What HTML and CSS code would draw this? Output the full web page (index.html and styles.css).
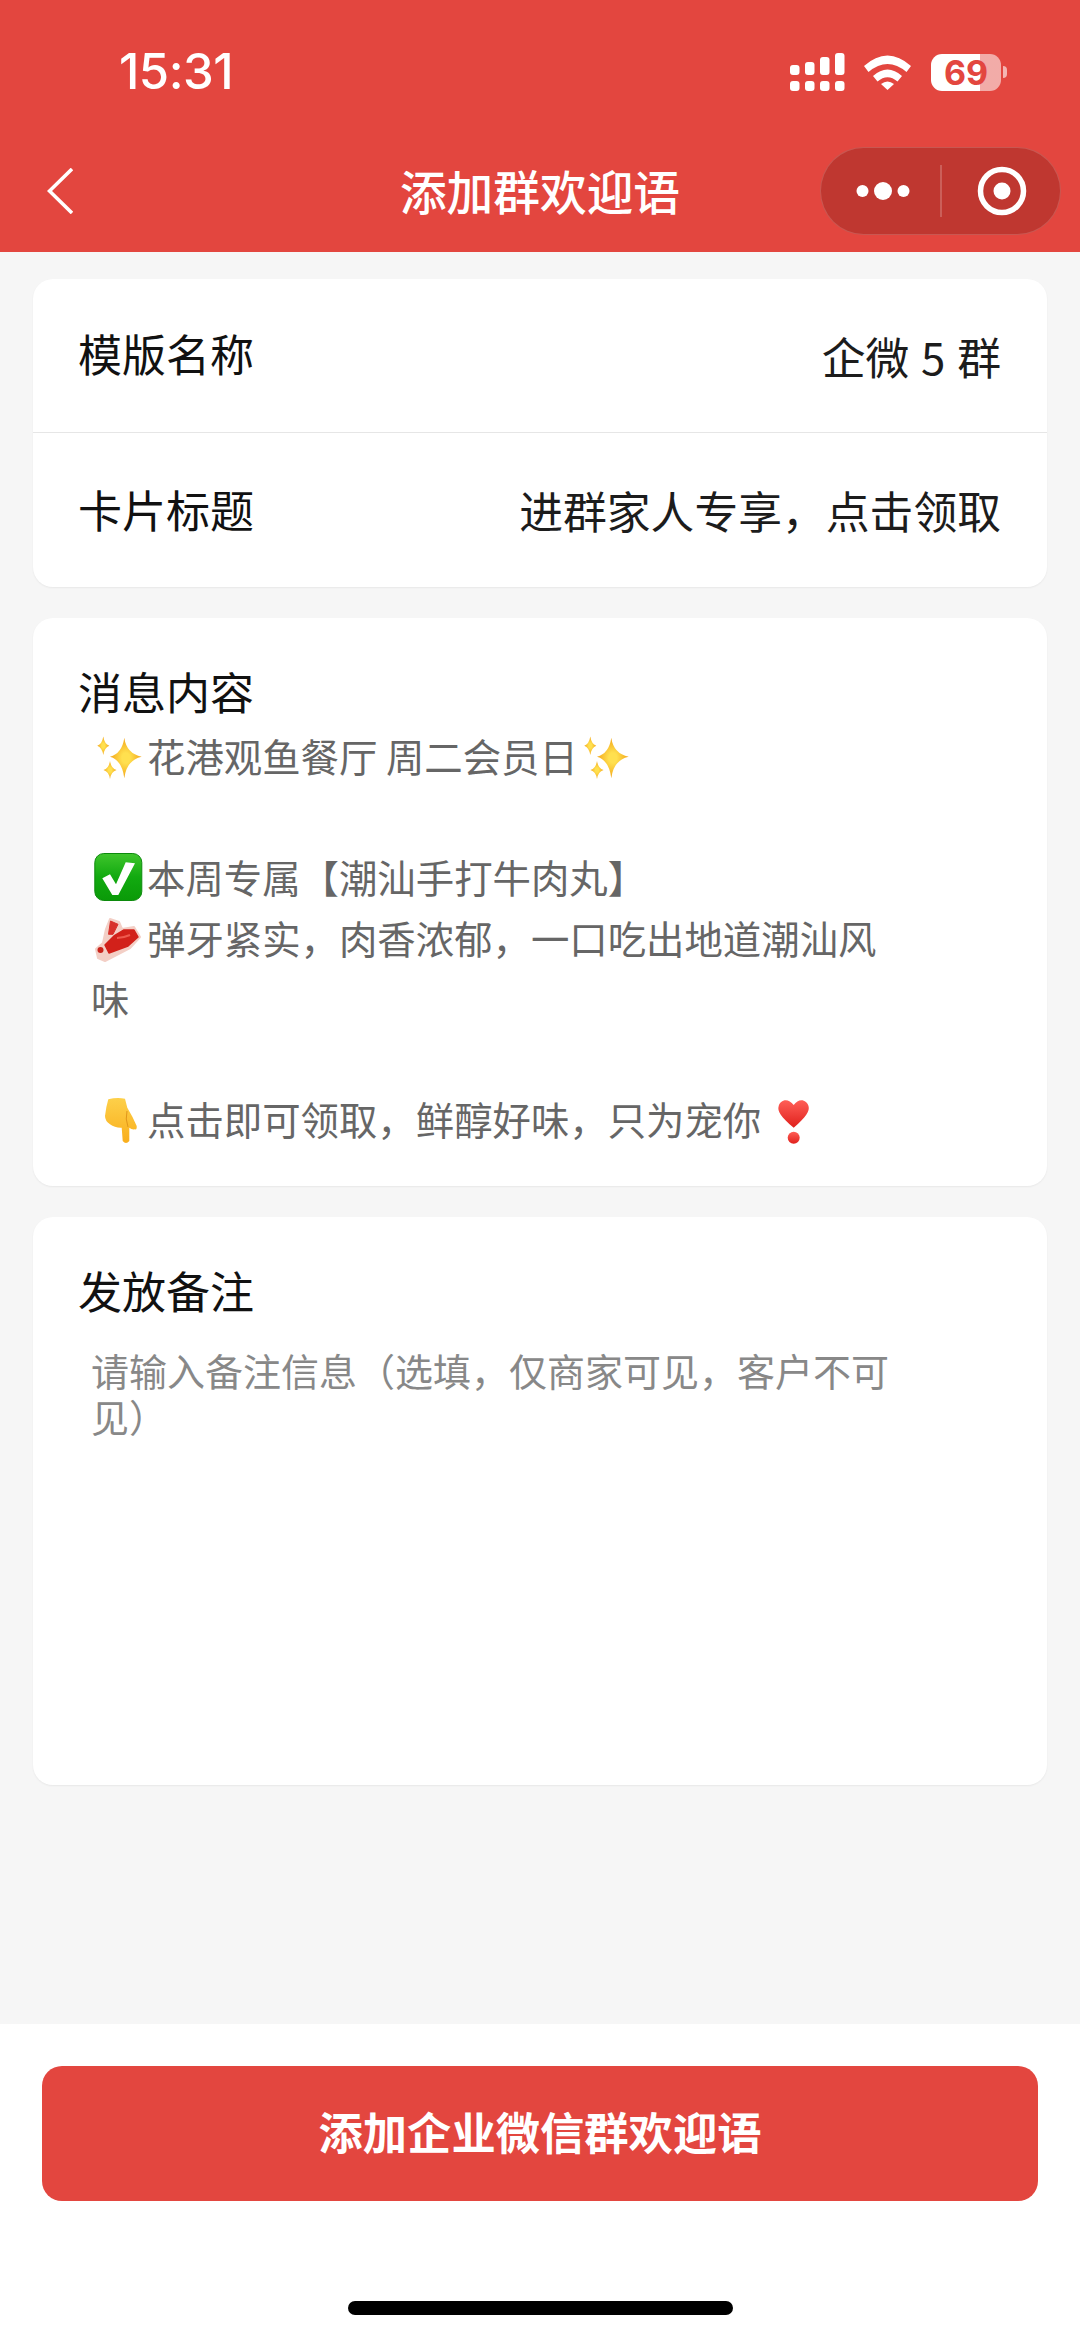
FILE: index.html
```html
<!DOCTYPE html>
<html lang="zh-CN">
  <head>
    <meta charset="UTF-8" />
    <meta name="viewport" content="width=device-width, initial-scale=1.0" />
    <title>添加群欢迎语</title>
    <link rel="stylesheet" href="styles.css">
  </head>
  <body>
    <svg class="defs" width="0" height="0">
      <defs>
        <radialGradient id="spark">
          <stop offset="0.25" stop-color="#ffe04f" />
          <stop offset="1" stop-color="#f3a61a" />
        </radialGradient>
        <linearGradient id="green" x1="0" y1="0" x2="0" y2="1">
          <stop offset="0" stop-color="#3fc52c" />
          <stop offset="0.5" stop-color="#12aa10" />
          <stop offset="1" stop-color="#0a9a08" />
        </linearGradient>
        <linearGradient id="finger" x1="0" y1="0" x2="0" y2="1">
          <stop offset="0" stop-color="#fdd04a" />
          <stop offset="1" stop-color="#f9ae1c" />
        </linearGradient>
        <linearGradient id="heart" x1="0" y1="0" x2="0" y2="1">
          <stop offset="0" stop-color="#ff5f57" />
          <stop offset="1" stop-color="#e0201c" />
        </linearGradient>
        <symbol id="sparkles" viewBox="-1 0 56 48">
          <path fill="url(#spark)" d="M32.300 3.700Q34.500 19.500 49.700 22.700Q34.500 26 32.300 44.300Q30 26 18 22.700Q30 19.500 32.300 3.700Z" />
          <path fill="url(#spark)" d="M11.300 2.400Q12.500 10 17.300 11.700Q12.500 13.500 11.300 21Q10 13.500 5.300 11.700Q10 10 11.300 2.400Z" />
          <path fill="url(#spark)" d="M18 27Q19.200 34.500 24.500 36Q19.200 37.500 18 45Q16.800 37.500 11.500 36Q16.800 34.500 18 27Z" />
        </symbol>
      </defs>
    </svg>

    <div class="page">
      <header class="topbar">
        <div class="statusbar">
          <span class="time">15:31</span>
          <div class="status-icons">
            <svg class="signal" width="55" height="38" viewBox="0 0 55 38">
              <g fill="#fff">
                <rect x="0" y="12" width="9.500" height="10" rx="3" />
                <rect x="15" y="9" width="9.500" height="13" rx="3" />
                <rect x="30" y="4" width="9.500" height="18" rx="3" />
                <rect x="45" y="0" width="9.500" height="22" rx="3" />
                <rect x="0" y="28" width="9.500" height="10" rx="3" />
                <rect x="15" y="28" width="9.500" height="10" rx="3" />
                <rect x="30" y="28" width="9.500" height="10" rx="3" />
                <rect x="45" y="28" width="9.500" height="10" rx="3" />
              </g>
            </svg>
            <svg class="wifi" width="47" height="36" viewBox="0 0 47 36">
              <g fill="#fff">
                <path d="M0 12Q23.500-9 47 12L42.500 18Q23.500 2 4.500 18Z" />
                <path d="M9 22Q23.500 9 38 22L33.500 27.500Q23.500 19 13.500 27.500Z" />
                <path d="M17 30Q23.500 25 30 30L23.500 36Z" />
              </g>
            </svg>
            <div class="battery"><span>69</span></div>
            <span class="battery-nub"></span>
          </div>
        </div>
        <nav class="navbar">
          <svg class="back" width="26" height="46" viewBox="0 0 26 46">
            <path d="M25 1L2.500 23L25 45" fill="none" stroke="#fff" stroke-width="3.600" />
          </svg>
          <h1 class="nav-title">添加群欢迎语</h1>
          <div class="capsule">
            <svg class="capsule-dots" width="64" height="20" viewBox="0 0 64 20">
              <circle cx="11.500" cy="10" r="6" fill="#fff" />
              <circle cx="32" cy="10" r="9" fill="#fff" />
              <circle cx="52.500" cy="10" r="6" fill="#fff" />
            </svg>
            <span class="capsule-line"></span>
            <svg class="capsule-ring" width="50" height="50" viewBox="0 0 50 50">
              <circle cx="25" cy="25" r="21.500" fill="none" stroke="#fff" stroke-width="5.500" />
              <circle cx="25" cy="25" r="8.500" fill="#fff" />
            </svg>
          </div>
        </nav>
      </header>

      <main class="content">
        <section class="card">
          <div class="row row-line">
            <span class="label">模版名称</span>
            <span class="value">企微 5 群</span>
          </div>
          <div class="row">
            <span class="label">卡片标题</span>
            <span class="value">进群家人专享，点击领取</span>
          </div>
        </section>

        <section class="card block">
          <div class="label">消息内容</div>
          <div class="message">
            <p class="line"><svg class="emoji"><use href="#sparkles" /></svg>花港观鱼餐厅 周二会员日<svg class="emoji"><use href="#sparkles" /></svg></p>
            <p class="line">&nbsp;</p>
            <p class="line"><svg class="emoji" viewBox="-1 0 56 48">
                <rect x="2.800" y="-1.500" width="47" height="47" rx="9" fill="url(#green)" stroke="#0c8a0c" stroke-width="1" />
                <path d="M10.300 23.300L18 19.300L24 29.300L33.700 7.300L43 8.300L26.300 40L20.300 40Z" fill="#fff" />
              </svg>本周专属【潮汕手打牛肉丸】</p>
            <p class="line"><svg class="emoji" viewBox="-1 0 56 48">
                <path d="M18 3L27 6L30 13L42 11L48 21L38 32L13 45L6 42L4 33L11 27L14 13Z" fill="#f3cfc6" stroke="#f3cfc6" stroke-width="2" stroke-linejoin="round" />
                <path d="M32 14L42 14L46 21L36 30L17 37L13 29L22 20Z" fill="#d2211a" stroke="#d2211a" stroke-width="1.500" stroke-linejoin="round" />
                <path d="M18.500 5L26 8.300L21 18.300L16.500 18.300Z" fill="#d8302a" stroke="#d8302a" stroke-width="1" stroke-linejoin="round" />
                <path d="M25 22Q31 22 38 19" fill="none" stroke="#ee5a4e" stroke-width="2" />
                <circle cx="8.500" cy="34" r="3" fill="#c9241c" />
              </svg>弹牙紧实，肉香浓郁，一口吃出地道潮汕风味</p>
            <p class="line">&nbsp;</p>
            <p class="line"><svg class="emoji" viewBox="-1 0 56 48">
                <path d="M16.300 2.300Q25 0 33 1.700L35.300 10.700Q41 20 44.700 29Q45 33 43 32.300Q40 33 37.300 30.700L37.300 44Q34 48 30.700 44L29.700 30.700Q23 31 18 27.300Q13 24 13 19Q14 10 16.300 2.300Z" fill="url(#finger)" />
                <path d="M35 14Q33 22 36 30" fill="none" stroke="#e0951a" stroke-width="1" />
              </svg>点击即可领取，鲜醇好味，只为宠你 <svg class="emoji emoji-heart" viewBox="-1 0 40 48">
                <path d="M22.700 30.700C10 20 6 14 7.700 9C9 3 17 0 22.700 8C28 0 36 3 37.500 9C39 14 35 20 22.700 30.700Z" fill="url(#heart)" />
                <circle cx="22.700" cy="40.700" r="6" fill="url(#heart)" />
              </svg></p>
          </div>
        </section>

        <section class="card block remark">
          <div class="label">发放备注</div>
          <div class="placeholder">请输入备注信息（选填，仅商家可见，客户不可见）</div>
        </section>
      </main>

      <footer class="footer">
        <button class="submit">添加企业微信群欢迎语</button>
        <div class="home-bar"></div>
      </footer>
    </div>
  </body>
</html>
```

FILE: styles.css
```css
* {
  padding: 0;
  margin: 0;
  box-sizing: border-box;
}
body {
  width: 1080px;
  height: 2337px;
  background-color: #f6f6f6;
  color: #111;
  font-family: "Noto Sans CJK SC", "Noto Sans", sans-serif;
  overflow: hidden;
}
.defs {
  position: absolute;
}
.page {
  height: 2337px;
  display: flex;
  flex-direction: column;
}

/* top red area */
.topbar {
  height: 252px;
  background-color: #e3463f;
  color: #fff;
}
.statusbar {
  height: 140px;
  display: flex;
  align-items: flex-start;
  justify-content: space-between;
  padding: 42px 73px 0 119px;
}
.time {
  font-family: Inter, Roboto, sans-serif;
  font-size: 49px;
  font-weight: 500;
  line-height: 60px;
  letter-spacing: -0.5px;
}
.status-icons {
  display: flex;
  align-items: center;
  margin-top: 11px;
}
.signal {
  margin-right: 19px;
}
.wifi {
  margin-right: 20px;
}
.battery {
  width: 70px;
  height: 37px;
  border-radius: 11px;
  background: linear-gradient(90deg, #fff 70%, rgba(255, 255, 255, 0.55) 70%);
  color: #e3463f;
  font-family: Inter, Roboto, sans-serif;
  font-size: 34px;
  font-weight: 700;
  line-height: 37px;
  text-align: center;
}
.battery-nub {
  width: 4px;
  height: 12px;
  margin-left: 2px;
  border-radius: 0 4px 4px 0;
  background-color: rgba(255, 255, 255, 0.6);
}
.navbar {
  height: 102px;
  display: grid;
  grid-template-columns: 241px 1fr 241px;
  align-items: center;
  padding: 0 19px;
}
.back {
  display: block;
  margin-left: 28px;
}
.nav-title {
  padding-bottom: 3px;
  font-size: 46.7px;
  font-weight: 500;
  line-height: 60px;
  text-align: center;
}
.capsule {
  width: 241px;
  height: 88px;
  display: flex;
  align-items: center;
  padding-left: 30px;
  border: 1px solid rgba(255, 255, 255, 0.16);
  border-radius: 44px;
  background-color: #bf3730;
}
.capsule-dots,
.capsule-ring {
  display: block;
}
.capsule-line {
  width: 2px;
  height: 52px;
  margin: 0 35px 0 25px;
  background-color: rgba(255, 255, 255, 0.2);
}

/* cards */
.content {
  flex: 1;
  display: flex;
  flex-direction: column;
  gap: 31px;
  padding: 27px 33px 0;
}
.card {
  background-color: #fff;
  border-radius: 20px;
  box-shadow: 0 1px 2px rgba(0, 0, 0, 0.06);
}
.row {
  height: 154px;
  display: flex;
  align-items: center;
  justify-content: space-between;
  padding: 0 46px;
}
.row-line {
  border-bottom: 1px solid #e6e6e6;
}
.label {
  margin: 0 0 0 -1px;
  font-size: 44px;
  line-height: 60px;
  color: #111;
}
.row .label {
  margin-bottom: 3px;
}
.row-line .label {
  margin-bottom: 5px;
}
.value {
  font-size: 43.8px;
  line-height: 60px;
  word-spacing: 2px;
  color: #1c1c1c;
}
.block {
  padding: 43px 46px 37px;
}
.message {
  width: 808px;
  margin: 4px 0 0 12px;
  font-size: 38.4px;
  line-height: 60.5px;
  color: #666;
}
.emoji {
  width: 56px;
  height: 48px;
  vertical-align: -10px;
  overflow: visible;
}
.emoji-heart {
  width: 40px;
}
.remark {
  min-height: 568px;
}
.placeholder {
  width: 808px;
  margin: 27px 0 0 12px;
  font-size: 38px;
  line-height: 46px;
  color: #888;
}

/* bottom */
.footer {
  height: 313px;
  background-color: #fff;
  padding: 42px 42px 0;
}
.submit {
  display: block;
  width: 100%;
  height: 135px;
  padding-bottom: 5px;
  border: none;
  border-radius: 20px;
  background-color: #e3463f;
  color: #fff;
  font-family: inherit;
  font-size: 44.3px;
  font-weight: 700;
}
.home-bar {
  width: 385px;
  height: 14px;
  margin: 100px auto 0;
  border-radius: 7px;
  background-color: #000;
}
```
